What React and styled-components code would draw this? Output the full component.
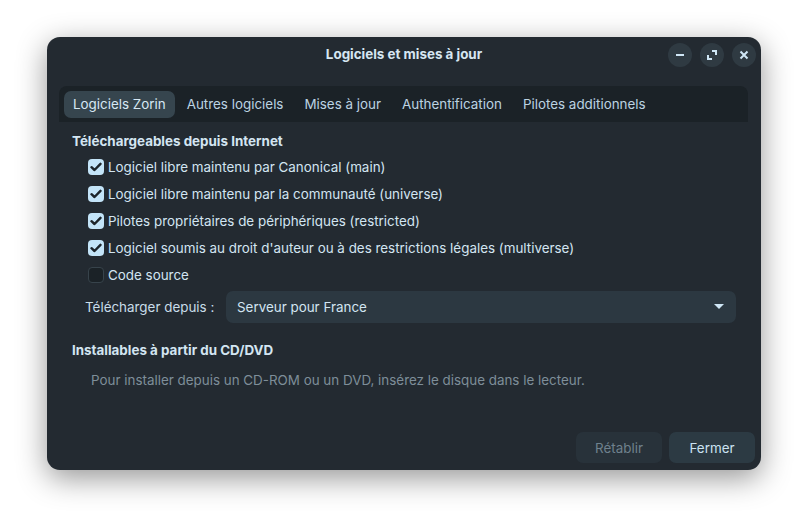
import React, { useState } from 'react'
import styled, { createGlobalStyle } from 'styled-components'

const GlobalStyle = createGlobalStyle`
  html, body {
    margin: 0;
    padding: 0;
    background: #ffffff;
  }
  body {
    width: 808px;
    height: 527px;
    overflow: hidden;
  }
`

const Page = styled.div`
  width: 808px;
  height: 527px;
  box-sizing: border-box;
  padding: 37px 47px 0 47px;
`

const Window = styled.div`
  width: 714px;
  height: 433px;
  background: #232a31;
  border-radius: 13px;
  box-shadow: 0 8px 30px rgba(0, 0, 0, 0.42);
  display: flex;
  flex-direction: column;
  font-family: Inter, "Noto Sans", sans-serif;
  font-size: 13.4px;
  color: #d3e5f1;
  overflow: hidden;
`

const TitleBar = styled.div`
  height: 34px;
  display: flex;
  align-items: center;
  justify-content: center;
  position: relative;
`

const Title = styled.div`
  font-weight: 700;
  color: #d6e6f1;
`

const Controls = styled.div`
  position: absolute;
  right: 5px;
  top: 6px;
  display: flex;
  gap: 8px;
`

const CircleButton = styled.div`
  width: 24px;
  height: 24px;
  border-radius: 50%;
  background: #2f3a42;
  display: flex;
  align-items: center;
  justify-content: center;
`

const TabBar = styled.div`
  margin: 15px 13px 0 12px;
  height: 36px;
  background: #1b2227;
  border-radius: 8px 8px 0 0;
  display: flex;
  align-items: center;
  padding: 0 5px;
`

const Tab = styled.div`
  height: 27px;
  padding: 0 9px;
  margin-right: 3px;
  display: flex;
  align-items: center;
  border-radius: 7px;
  color: ${p => (p.$active ? '#d6e8f4' : '#bcd3e2')};
  background: ${p => (p.$active ? '#36454e' : 'transparent')};
`

const Content = styled.div`
  flex: 1;
  padding: 10px 25px 0 25px;
  display: flex;
  flex-direction: column;
`

const SectionTitle = styled.div`
  font-weight: 700;
  height: 18px;
  line-height: 18px;
  color: #d3e5f1;
`

const CheckList = styled.div`
  display: flex;
  flex-direction: column;
  margin-top: 3px;
  padding-left: 16px;
`

const CheckRow = styled.label`
  display: flex;
  align-items: center;
  gap: 4px;
  height: 27px;
  color: #d3e5f1;
  cursor: pointer;
`

const Box = styled.span`
  width: 16px;
  height: 16px;
  border-radius: 4px;
  box-sizing: border-box;
  display: flex;
  align-items: center;
  justify-content: center;
  background: ${p => (p.$on ? '#c3e4f8' : '#1b2227')};
  border: ${p => (p.$on ? 'none' : '1px solid #37434b')};
`

const ComboRow = styled.div`
  display: flex;
  align-items: center;
  margin-top: 3px;
  padding-left: 13px;
  height: 32px;
`

const ComboLabel = styled.div`
  color: #c9dde9;
  width: 141px;
`

const Combo = styled.div`
  flex: 1;
  height: 32px;
  border-radius: 7px;
  background: #2c3841;
  display: flex;
  align-items: center;
  justify-content: space-between;
  padding: 0 12px 0 11px;
  color: #d3e5f1;
`

const Gap = styled.div`
  height: ${p => p.$h}px;
`

const Info = styled.div`
  line-height: 16px;
  color: #7e8e99;
  padding-left: 19px;
  margin-top: 13px;
`

const Footer = styled.div`
  display: flex;
  justify-content: flex-end;
  gap: 7px;
  padding: 0 6px 7px 0;
`

const FootButton = styled.button`
  font-family: Inter, sans-serif;
  font-size: 13.4px;
  height: 31px;
  width: ${p => p.$w}px;
  border: none;
  border-radius: 7px;
  background: ${p => (p.disabled ? '#28323a' : '#2c3a43')};
  color: ${p => (p.disabled ? '#6f818d' : '#cbe2f1')};
`

const Check = () => (
  <svg width="12" height="10" viewBox="0 0 12 10">
    <path d="M1.5 5.2 L4.5 8 L10.5 1.8" fill="none" stroke="#1c242a" strokeWidth="2.4" strokeLinecap="round" strokeLinejoin="round" />
  </svg>
)

const sources = [
  { label: 'Logiciel libre maintenu par Canonical (main)', on: true },
  { label: 'Logiciel libre maintenu par la communauté (universe)', on: true },
  { label: 'Pilotes propriétaires de périphériques (restricted)', on: true },
  { label: "Logiciel soumis au droit d'auteur ou à des restrictions légales (multiverse)", on: true },
  { label: 'Code source', on: false },
]

const tabs = ['Logiciels Zorin', 'Autres logiciels', 'Mises à jour', 'Authentification', 'Pilotes additionnels']

export default function App() {
  const [checks, setChecks] = useState(sources.map(s => s.on))
  const toggle = i => setChecks(c => c.map((v, j) => (j === i ? !v : v)))

  return (
    <Page>
      <GlobalStyle />
      <Window>
        <TitleBar>
          <Title>Logiciels et mises à jour</Title>
          <Controls>
            <CircleButton>
              <svg width="10" height="10" viewBox="0 0 10 10">
                <rect x="1" y="4" width="8" height="2" fill="#cfe6f5" />
              </svg>
            </CircleButton>
            <CircleButton>
              <svg width="10" height="10" viewBox="0 0 10 10">
                <path d="M5 1 H9 V5 M1 5 V9 H5" fill="none" stroke="#cfe6f5" strokeWidth="2" />
              </svg>
            </CircleButton>
            <CircleButton>
              <svg width="10" height="10" viewBox="0 0 10 10">
                <path d="M1.5 1.5 L8.5 8.5 M8.5 1.5 L1.5 8.5" fill="none" stroke="#cfe6f5" strokeWidth="2" />
              </svg>
            </CircleButton>
          </Controls>
        </TitleBar>

        <TabBar>
          {tabs.map((t, i) => (
            <Tab key={t} $active={i === 0}>{t}</Tab>
          ))}
        </TabBar>

        <Content>
          <SectionTitle>Téléchargeables depuis Internet</SectionTitle>
          <CheckList>
            {sources.map((s, i) => (
              <CheckRow key={s.label} onClick={() => toggle(i)}>
                <Box $on={checks[i]}>{checks[i] && <Check />}</Box>
                {s.label}
              </CheckRow>
            ))}
          </CheckList>

          <ComboRow>
            <ComboLabel>Télécharger depuis :</ComboLabel>
            <Combo>
              Serveur pour France
              <svg width="10" height="6" viewBox="0 0 10 6">
                <path d="M0 0 H10 L5 5 Z" fill="#cfe6f5" />
              </svg>
            </Combo>
          </ComboRow>

          <Gap $h={18} />
          <SectionTitle>Installables à partir du CD/DVD</SectionTitle>
          <Info>Pour installer depuis un CD-ROM ou un DVD, insérez le disque dans le lecteur.</Info>
        </Content>

        <Footer>
          <FootButton $w={86} disabled>Rétablir</FootButton>
          <FootButton $w={86}>Fermer</FootButton>
        </Footer>
      </Window>
    </Page>
  )
}
